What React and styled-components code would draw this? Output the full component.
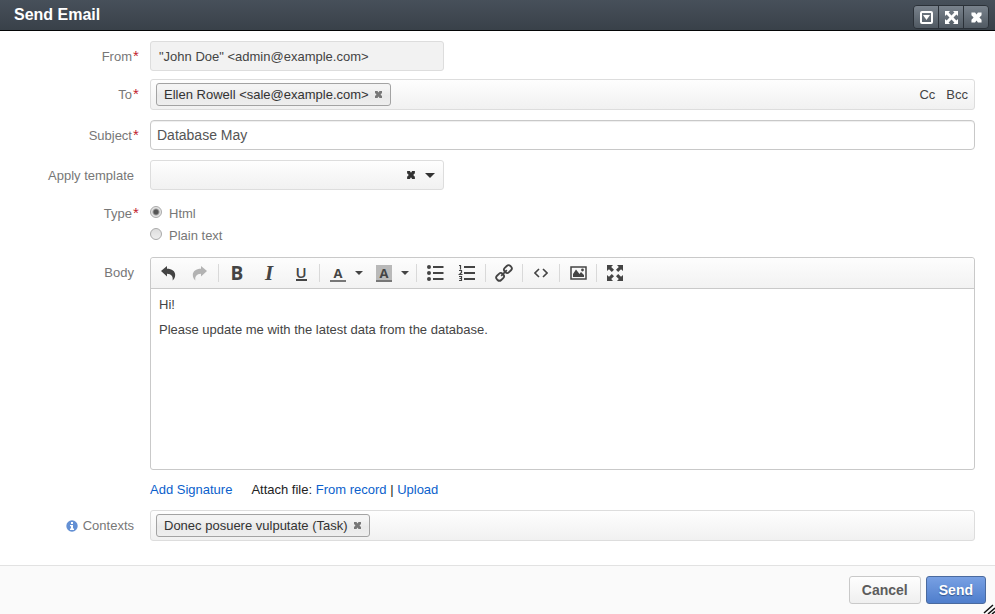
import React, { useState } from "react";
import styled, { createGlobalStyle, css } from "styled-components";

const GlobalStyle = createGlobalStyle`
  *, *::before, *::after { box-sizing: border-box; }
  html, body { margin: 0; background: #fff; }
  body, button, input, select {
    font-family: "Liberation Sans", Arial, sans-serif;
    font-size: 13px;
    line-height: 16px;
  }
  button { margin: 0; padding: 0; border: 0; background: none; color: inherit; cursor: pointer; }
  svg { display: block; flex: none; }
`;

const softGradient = "linear-gradient(to bottom, #fefefe, #f1f1f1)";

const Dialog = styled.div`
  display: flex;
  flex-direction: column;
  min-height: 100vh;
  color: #333;
`;

const TitleBar = styled.header`
  display: flex;
  align-items: center;
  justify-content: space-between;
  height: 31px;
  padding: 0 6px 0 14px;
  border-bottom: 1px solid #050607;
  background: linear-gradient(to bottom, #47505a, #394149);
`;

const Title = styled.h1`
  margin: 0;
  color: #fff;
  font-size: 16px;
  line-height: 30px;
`;

const WindowControls = styled.div`
  display: flex;
  height: 24px;
  margin-top: 4px;
  border: 1px solid #2b3138;
  border-radius: 4px;
  overflow: hidden;
`;

const WindowButton = styled.button`
  display: flex;
  align-items: center;
  justify-content: center;
  width: 25px;
  color: #fff;
  background: linear-gradient(to bottom, #79828c, #505962);
  & + & { border-left: 1px solid #2b3138; }
  &:first-child { width: 24px; }
`;

const Form = styled.form`
  display: flex;
  flex: 1;
  flex-direction: column;
`;

const Fields = styled.div`
  flex: 1;
  display: flex;
  flex-direction: column;
  padding: 10px 20px 14px 0;
`;

const Row = styled.div`
  display: grid;
  grid-template-columns: 150px minmax(0, 1fr);
  margin-bottom: ${(p) => p.$gap || 10}px;
`;

const Caption = styled.label`
  display: flex;
  align-items: flex-start;
  justify-content: flex-end;
  gap: 1px;
  padding: ${(p) => p.$top ?? 8}px ${(p) => (p.$required ? 11 : 16)}px 0 0;
  color: #777;
`;

const Star = styled.span`
  color: #c21f2f;
  width: 6px;
  font-size: 15px;
  line-height: 14px;
`;

const box = css`
  border: 1px solid #ddd;
  border-radius: 3px;
  background: ${softGradient};
`;

const ReadOnlyInput = styled.input`
  ${box}
  width: 294px;
  max-width: 100%;
  height: 30px;
  padding: 0 8px;
  color: #444;
  background: #f2f2f2;
`;

const SubjectInput = styled.input`
  width: 100%;
  height: 30px;
  padding: 0 6px;
  border: 1px solid #c8c8c8;
  border-radius: 4px;
  background: #fff;
  box-shadow: inset 0 1px 1px #eee;
  color: #555;
  font-size: 14px;
`;

const TokenField = styled.div`
  ${box}
  display: flex;
  align-items: center;
  height: 31px;
  padding: 0 5px;
`;

const Token = styled.span`
  display: flex;
  align-items: center;
  gap: 5px;
  height: 23px;
  padding: 0 7px;
  border: 1px solid #a3a3a3;
  border-radius: 3px;
  background: linear-gradient(to bottom, #f4f4f4 20%, #e9e9e9 55%, #eee);
  color: #333;
  white-space: nowrap;
`;

const TokenRemove = styled.button`
  color: #777;
`;

const TokenInput = styled.input`
  flex: 1;
  min-width: 20px;
  border: 0;
  outline: 0;
  background: transparent;
`;

const CopyButton = styled.button`
  margin-left: 11px;
  color: #444;
  &:last-child { margin-right: 1px; }
`;

const SelectBox = styled.div`
  ${box}
  display: grid;
  grid-template-columns: minmax(0, 1fr) 16px 22px;
  align-items: center;
  width: 294px;
  max-width: 100%;
  height: 30px;
  padding-right: 2px;
  color: #333;
`;

const Select = styled.select`
  grid-column: 1 / -1;
  grid-row: 1;
  width: 100%;
  height: 28px;
  padding: 0 8px;
  border: 0;
  appearance: none;
  background: transparent;
`;

const ClearButton = styled.button`
  grid-column: 2;
  grid-row: 1;
  display: flex;
  justify-content: center;
  z-index: 1;
`;

const SelectArrow = styled.span`
  grid-column: 3;
  grid-row: 1;
  display: flex;
  justify-content: center;
  pointer-events: none;
`;

const Choices = styled.div`
  display: flex;
  flex-direction: column;
  gap: 4px;
`;

const Choice = styled.label`
  display: flex;
  align-items: center;
  gap: 7px;
  color: #777;
  line-height: 18px;
`;

const Radio = styled.input`
  appearance: none;
  width: 12px;
  height: 12px;
  margin: 0 0 4px;
  border: 1px solid #a9a9a9;
  border-radius: 50%;
  background: linear-gradient(to bottom, #ddd, #eee);
  &:checked {
    background: radial-gradient(circle, #555 0 2px, #e4e4e4 4px);
  }
`;

const Editor = styled.div`
  border: 1px solid #c9c9c9;
  border-radius: 3px;
`;

const Toolbar = styled.div`
  display: flex;
  align-items: center;
  flex-wrap: wrap;
  min-height: 31px;
  padding: 0 1px;
  border-bottom: 1px solid #c9c9c9;
  border-radius: 3px 3px 0 0;
  background: linear-gradient(to bottom, #fdfdfd, #f2f2f2);
`;

const Tool = styled.button`
  display: flex;
  align-items: center;
  justify-content: center;
  width: 32px;
  height: 28px;
  color: ${(p) => (p.disabled ? "#b3b3b3" : "#444")};
`;

const ToolMenu = styled.button`
  display: flex;
  align-items: center;
  justify-content: center;
  width: 14px;
  height: 28px;
  padding-right: 4px;
  color: #444;
`;

const Separator = styled.span`
  width: 1px;
  height: 18px;
  margin: 0 2px;
  background: #d9d9d9;
`;

const Glyph = styled.span`
  font-family: ${(p) => (p.$serif ? '"Liberation Serif", serif' : '"Open Sans", sans-serif')};
  font-size: ${(p) => (p.$serif ? 21 : 19)}px;
  font-style: ${(p) => (p.$serif ? "italic" : "normal")};
  font-weight: 700;
  line-height: 18px;
`;

const UnderGlyph = styled.span`
  width: 11px;
  height: 15px;
  border-bottom: 2px solid #444;
  font: 600 15px/12px "Open Sans", sans-serif;
  text-align: center;
`;

const ColorGlyph = styled.span`
  width: 16px;
  height: 17px;
  border-bottom: 2px solid #777;
  background: ${(p) => (p.$filled ? "#b9b9b9" : "transparent")};
  font: 700 13px/16px "Open Sans", sans-serif;
  text-align: center;
`;

const Content = styled.div`
  min-height: 180px;
  padding: 8px 8px 6px;
  outline: 0;
  color: #444;
  p { margin: 0 0 9px; }
`;

const Links = styled.div`
  display: flex;
  gap: 19px;
  padding-left: 150px;
  margin: 2px 0 12px;
  color: #222;
`;

const Link = styled.a`
  color: #0b5fcc;
  text-decoration: none;
`;

const Footer = styled.footer`
  display: flex;
  align-items: flex-start;
  justify-content: flex-end;
  gap: 5px;
  position: relative;
  height: 49px;
  padding: 10px 9px 0;
  border-top: 1px solid #e2e2e2;
  background: #fafafa;
`;

const Action = styled.button`
  height: 28px;
  padding: 0 12px;
  border: 1px solid ${(p) => (p.$primary ? "#4a6a9f" : "#c9c9c9")};
  border-radius: 3px;
  background: ${(p) => (p.$primary ? "linear-gradient(to bottom, #78a0e3, #4f7ecc)" : "linear-gradient(to bottom, #fefefe, #efefef)")};
  color: ${(p) => (p.$primary ? "#fff" : "#5c5c5c")};
  font-size: 14px;
  font-weight: 700;
  text-shadow: ${(p) => (p.$primary ? "0 1px 1px #33558c" : "none")};
`;

const ResizeHandle = styled.svg`
  position: absolute;
  right: 0;
  bottom: 0;
  cursor: se-resize;
`;

const Cross = ({ size = 9 }) => (
  <svg width={size} height={size} viewBox="0 0 9 9" fill="currentColor" aria-hidden="true">
    <path d="M1 1H3.5L4.5 2.5L5.5 1H8V3L6.5 4.5L8 6V8H5.5L4.5 6.5L3.5 8H1V6L2.5 4.5L1 3Z" />
  </svg>
);

const Caret = ({ width = 8, height = 4 }) => (
  <svg width={width} height={height} viewBox="0 0 8 4" preserveAspectRatio="none" fill="currentColor" aria-hidden="true">
    <path d="M0 0H8L4 4Z" />
  </svg>
);

const ArrowIcon = ({ flip }) => (
  <svg width="16" height="16" viewBox="0 0 16 16" fill="currentColor" aria-hidden="true">
    <path transform={flip ? "translate(16 0) scale(-1 1)" : undefined} d="M1 6L7 1V3.8C12 3.8 15.2 6.2 15.2 10C15.2 12.4 14 14.4 12.6 15.5C13.4 11.6 11.4 8.9 7 8.7V11.5Z" />
  </svg>
);

const ExpandIcon = ({ size = 18 }) => (
  <svg width={size} height={size} viewBox="0 0 18 18" fill="currentColor" aria-hidden="true">
    <path d="M1 1H7L5.2 3L8 5.8L5.8 8L3 5.2L1 7ZM17 1V7L15 5.2L12.2 8L10 5.8L12.8 3L11 1ZM1 17V11L3 12.8L5.8 10L8 12.2L5.2 15L7 17ZM17 17H11L12.8 15L10 12.2L12.2 10L15 12.8L17 11Z" />
  </svg>
);

const WindowExpandIcon = () => (
  <svg width="13" height="13" viewBox="0 0 13 13" fill="currentColor" aria-hidden="true">
    <path d="M0 0H5L3.6 1.6L6.5 4.5L9.4 1.6L8 0H13V5L11.4 3.6L8.5 6.5L11.4 9.4L13 8V13H8L9.4 11.4L6.5 8.5L3.6 11.4L5 13H0V8L1.6 9.4L4.5 6.5L1.6 3.6L0 5Z" />
  </svg>
);

const MinimizeIcon = () => (
  <svg width="13" height="13" viewBox="0 0 13 13" fill="currentColor" aria-hidden="true">
    <rect x="1" y="1" width="11" height="11" rx="1" fill="none" stroke="currentColor" strokeWidth="2" />
    <path d="M3 4H10L6.5 9Z" />
  </svg>
);

const BulletIcon = () => (
  <svg width="18" height="16" viewBox="0 0 18 16" fill="currentColor" aria-hidden="true">
    <circle cx="3" cy="2" r="2" /><circle cx="3" cy="8" r="2" /><circle cx="3" cy="14" r="2" />
    <path d="M7 1H17.5V3H7ZM7 7H17.5V9H7ZM7 13H17.5V15H7Z" />
  </svg>
);

const NumberIcon = () => (
  <svg width="18" height="18" viewBox="0 0 18 18" aria-hidden="true">
    <path d="M6 3H17M6 9H17M6 15H17" stroke="currentColor" strokeWidth="2" />
    <path d="M1 1.5H2.5V5.5M1 6.5H3.5V8.5L1.5 10.5H4.5M1 12.5H3.5V16.5H1M1.5 14.5H3.5" fill="none" stroke="currentColor" strokeWidth="1.2" />
  </svg>
);

const LinkIcon = () => (
  <svg width="18" height="18" viewBox="0 0 18 18" fill="none" stroke="currentColor" strokeWidth="1.8" aria-hidden="true">
    <g transform="rotate(-45 9 9)">
      <rect x="-0.5" y="6" width="8" height="6" rx="2.6" />
      <rect x="10.5" y="6" width="8" height="6" rx="2.6" />
      <path d="M5 9H13" />
    </g>
  </svg>
);

const CodeIcon = () => (
  <svg width="14" height="10" viewBox="0 0 14 10" fill="none" stroke="currentColor" strokeWidth="1.6" aria-hidden="true">
    <path d="M5 1L1 5L5 9M9 1L13 5L9 9" />
  </svg>
);

const ImageIcon = () => (
  <svg width="17" height="14" viewBox="0 0 17 14" aria-hidden="true">
    <rect x="1" y="1" width="15" height="12" fill="none" stroke="currentColor" strokeWidth="1.5" />
    <path d="M3 11V8L6 3.5L9.5 8L11 6L14 9V11Z" fill="currentColor" />
    <circle cx="12.5" cy="4" r="1.4" fill="currentColor" />
  </svg>
);

const InfoIcon = () => (
  <svg width="12" height="12" viewBox="0 0 12 12" role="img" aria-label="Information">
    <circle cx="6" cy="6" r="5.7" fill="#6490d4" />
    <path d="M5 2H7V4H5ZM4 5H7V8.5H8V10H4V8.5H5V6.3H4Z" fill="#fff" />
  </svg>
);

const InfoSlot = styled.span`
  padding: 2px 4px 0 0;
`;

function Label({ required, info, children, ...rest }) {
  return (
    <Caption $required={required} {...rest}>
      {info && <InfoSlot><InfoIcon /></InfoSlot>}
      <span>{children}</span>
      {required && <Star>*</Star>}
    </Caption>
  );
}

export default function App() {
  const [type, setType] = useState("html");
  const [template, setTemplate] = useState("");
  const [subject, setSubject] = useState("Database May");

  return (
    <>
      <GlobalStyle />
      <Dialog role="dialog" aria-labelledby="title">
        <TitleBar>
          <Title id="title">Send Email</Title>
          <WindowControls>
            <WindowButton aria-label="Minimize"><MinimizeIcon /></WindowButton>
            <WindowButton aria-label="Maximize"><WindowExpandIcon /></WindowButton>
            <WindowButton aria-label="Close"><Cross size={13} /></WindowButton>
          </WindowControls>
        </TitleBar>
        <Form onSubmit={(e) => e.preventDefault()}>
          <Fields>
            <Row $gap={8}>
              <Label htmlFor="from" required>From</Label>
              <ReadOnlyInput id="from" readOnly value={'"John Doe" <admin@example.com>'} />
            </Row>
            <Row>
              <Label htmlFor="to" required>To</Label>
              <TokenField>
                <Token>
                  Ellen Rowell &lt;sale@example.com&gt;
                  <TokenRemove type="button" aria-label="Remove recipient"><Cross /></TokenRemove>
                </Token>
                <TokenInput id="to" />
                <CopyButton type="button">Cc</CopyButton>
                <CopyButton type="button">Bcc</CopyButton>
              </TokenField>
            </Row>
            <Row>
              <Label htmlFor="subject" required>Subject</Label>
              <SubjectInput id="subject" value={subject} onChange={(e) => setSubject(e.target.value)} />
            </Row>
            <Row $gap={15}>
              <Label htmlFor="template">Apply template</Label>
              <SelectBox>
                <Select id="template" value={template} onChange={(e) => setTemplate(e.target.value)}>
                  <option value="" />
                </Select>
                <ClearButton type="button" aria-label="Clear template" onClick={() => setTemplate("")}><Cross size={10} /></ClearButton>
                <SelectArrow><Caret width={10} height={5} /></SelectArrow>
              </SelectBox>
            </Row>
            <Row $gap={12}>
              <Label as="div" id="type-label" $top={1} required>Type</Label>
              <Choices role="radiogroup" aria-labelledby="type-label">
                <Choice>
                  <Radio type="radio" name="type" checked={type === "html"} onChange={() => setType("html")} />
                  Html
                </Choice>
                <Choice>
                  <Radio type="radio" name="type" checked={type === "text"} onChange={() => setType("text")} />
                  Plain text
                </Choice>
              </Choices>
            </Row>
            <Row>
              <Label as="div" id="body-label">Body</Label>
              <Editor>
                <Toolbar role="toolbar" aria-label="Formatting">
                  <Tool type="button" aria-label="Undo"><ArrowIcon /></Tool>
                  <Tool type="button" aria-label="Redo" disabled><ArrowIcon flip /></Tool>
                  <Separator />
                  <Tool type="button" aria-label="Bold"><Glyph>B</Glyph></Tool>
                  <Tool type="button" aria-label="Italic"><Glyph $serif>I</Glyph></Tool>
                  <Tool type="button" aria-label="Underline"><UnderGlyph>U</UnderGlyph></Tool>
                  <Separator />
                  <Tool type="button" aria-label="Text color"><ColorGlyph>A</ColorGlyph></Tool>
                  <ToolMenu type="button" aria-label="Choose text color"><Caret /></ToolMenu>
                  <Tool type="button" aria-label="Background color"><ColorGlyph $filled>A</ColorGlyph></Tool>
                  <ToolMenu type="button" aria-label="Choose background color"><Caret /></ToolMenu>
                  <Separator />
                  <Tool type="button" aria-label="Bullet list"><BulletIcon /></Tool>
                  <Tool type="button" aria-label="Numbered list"><NumberIcon /></Tool>
                  <Separator />
                  <Tool type="button" aria-label="Insert link"><LinkIcon /></Tool>
                  <Separator />
                  <Tool type="button" aria-label="Source code"><CodeIcon /></Tool>
                  <Separator />
                  <Tool type="button" aria-label="Insert image"><ImageIcon /></Tool>
                  <Separator />
                  <Tool type="button" aria-label="Fullscreen"><ExpandIcon /></Tool>
                </Toolbar>
                <Content contentEditable suppressContentEditableWarning role="textbox" aria-multiline="true" aria-labelledby="body-label">
                  <p>Hi!</p>
                  <p>Please update me with the latest data from the database.</p>
                </Content>
              </Editor>
            </Row>
            <Links>
              <Link href="#signature">Add Signature</Link>
              <span>Attach file: <Link href="#record">From record</Link> | <Link href="#upload">Upload</Link></span>
            </Links>
            <Row>
              <Label htmlFor="contexts" info>Contexts</Label>
              <TokenField>
                <Token>
                  Donec posuere vulputate (Task)
                  <TokenRemove type="button" aria-label="Remove context"><Cross /></TokenRemove>
                </Token>
                <TokenInput id="contexts" />
              </TokenField>
            </Row>
          </Fields>
          <Footer>
            <Action type="button">Cancel</Action>
            <Action type="submit" $primary>Send</Action>
            <ResizeHandle width="12" height="12" viewBox="0 0 12 12" stroke="#111" strokeWidth="1.5" aria-hidden="true">
              <path d="M1 11L10 3M5 12L12 6M9 12L12 9.5" />
            </ResizeHandle>
          </Footer>
        </Form>
      </Dialog>
    </>
  );
}
